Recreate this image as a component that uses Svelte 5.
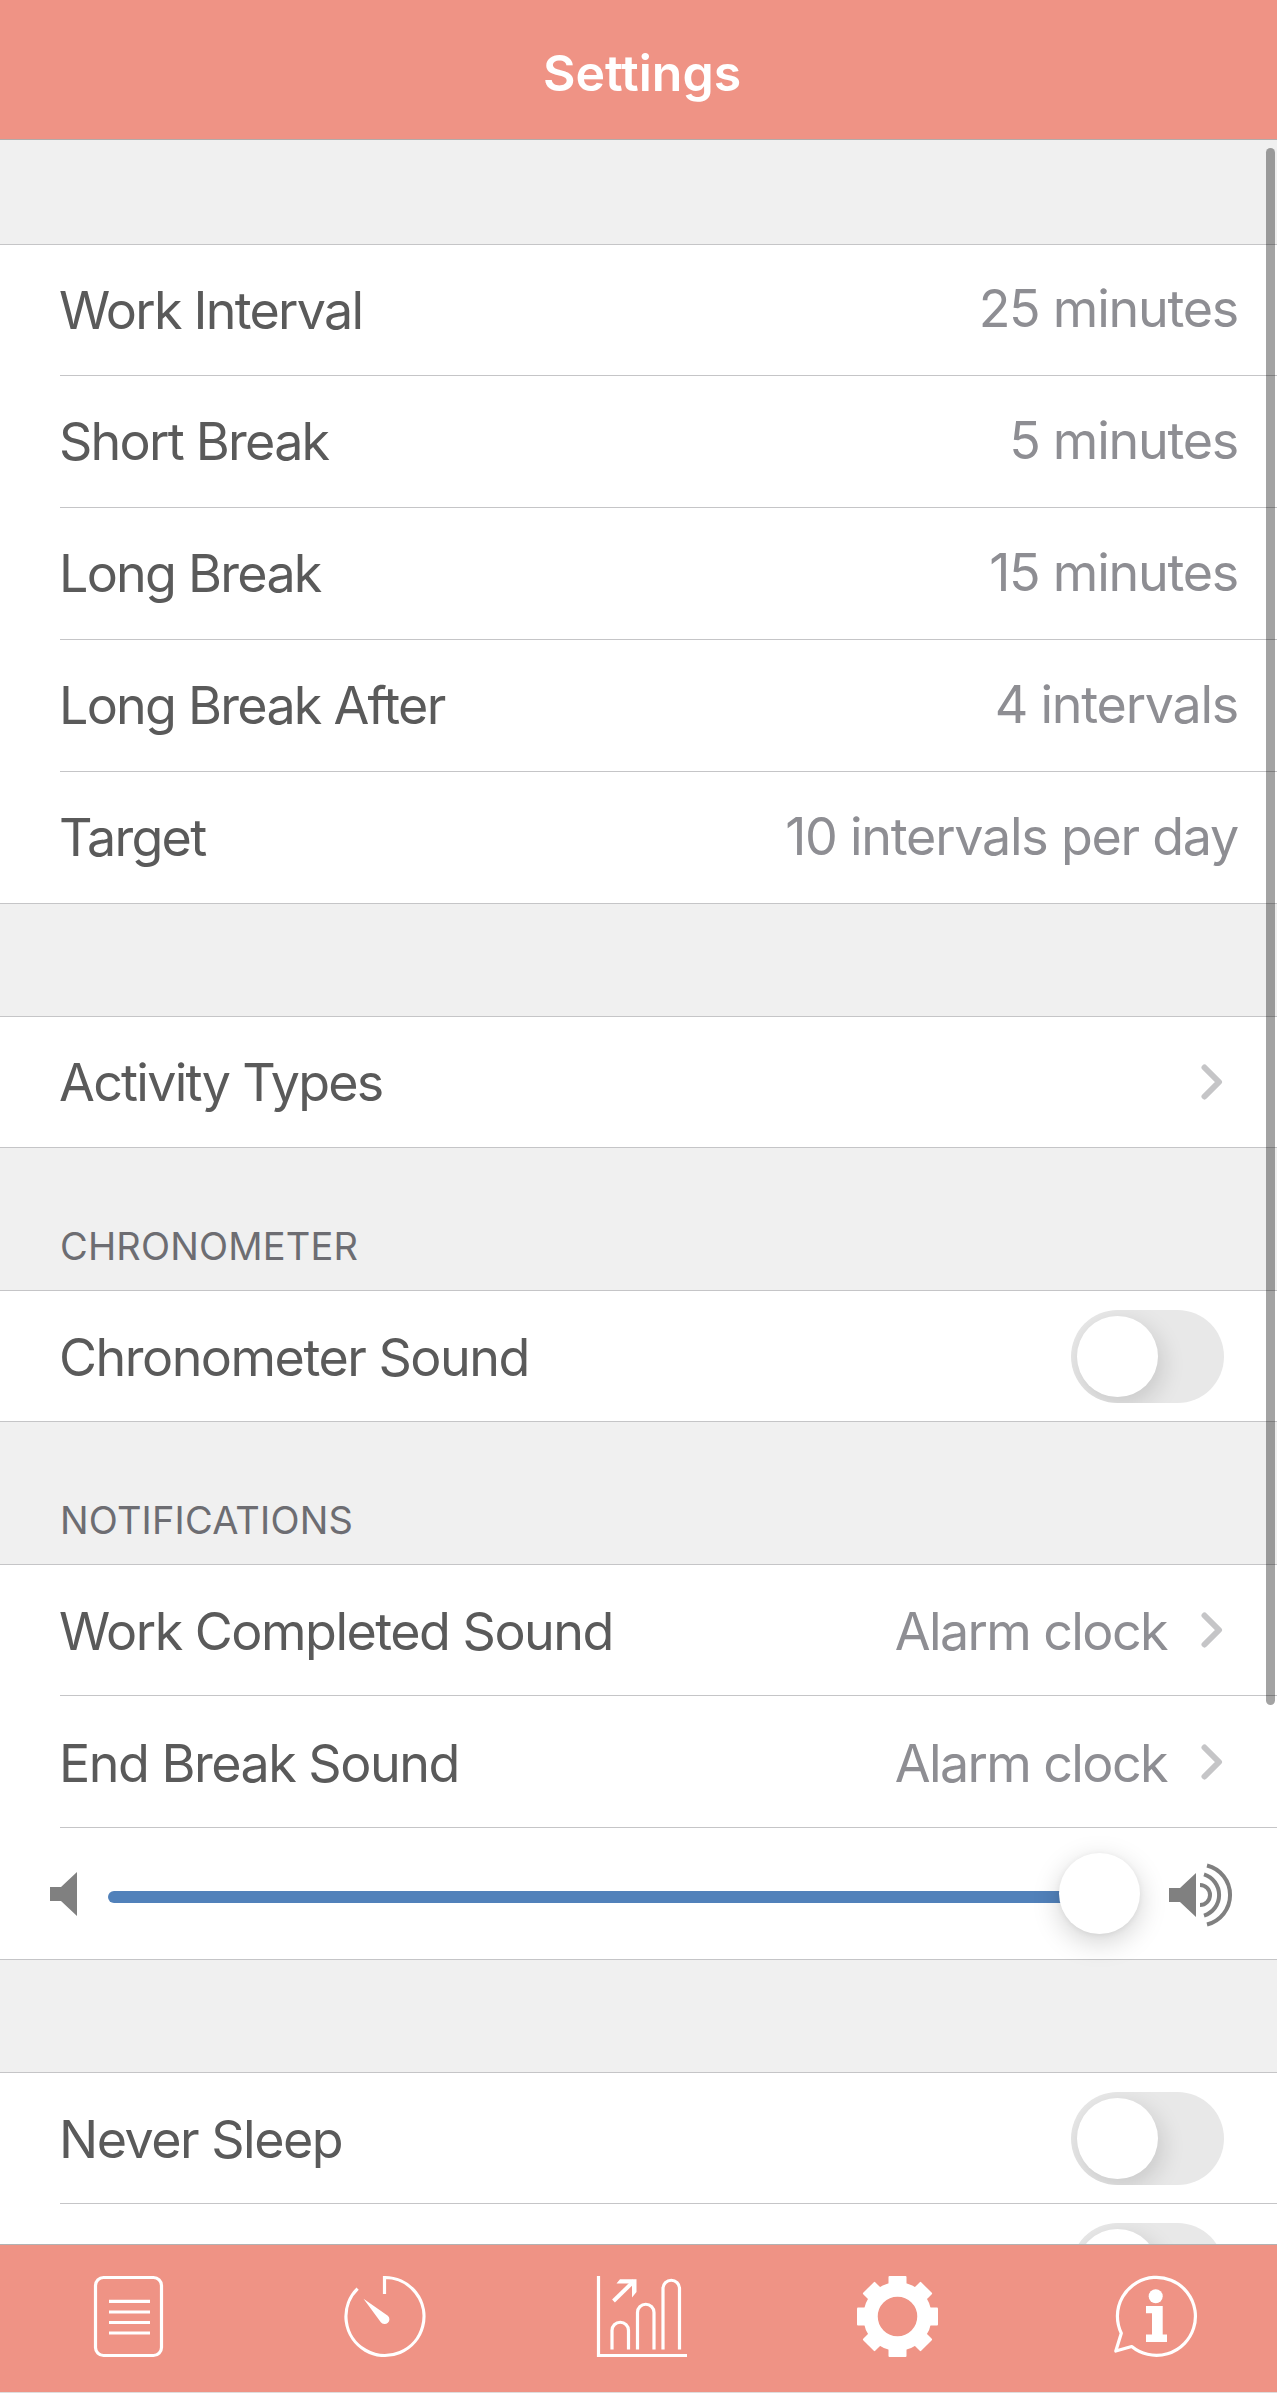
<script>
	const chevron = 'M3.5 3.5 L18 18 L3.5 32.5';

	const groups = [
		{
			gap: 104,
			rows: [
				{ label: 'Work Interval', value: '25 minutes' },
				{ label: 'Short Break', value: '5 minutes' },
				{ label: 'Long Break', value: '15 minutes' },
				{ label: 'Long Break After', value: '4 intervals' },
				{ label: 'Target', value: '10 intervals per day' }
			]
		},
		{ gap: 112, rows: [{ label: 'Activity Types', link: true }] },
		{ gap: 142, title: 'Chronometer', rows: [{ label: 'Chronometer Sound', toggle: true }] },
		{
			gap: 142,
			title: 'Notifications',
			rows: [
				{ label: 'Work Completed Sound', value: 'Alarm clock', link: true },
				{ label: 'End Break Sound', value: 'Alarm clock', link: true },
				{ slider: true }
			]
		},
		{ gap: 112, rows: [{ label: 'Never Sleep', toggle: true }, { label: '', toggle: true }] }
	];

	let volume = $state(100);
	const thumbLeft = $derived(951 * (volume / 100));

	const teeth = [0, 90, 180, 270];
</script>

<div class="screen">
	<header class="nav-bar"><h1>Settings</h1></header>

	<main class="settings">
		{#each groups as group}
			<section>
				<div class="gap" style="height: {group.gap}px">
					{#if group.title}<h2>{group.title}</h2>{/if}
				</div>
				<div class="group">
					{#each group.rows as row}
						{#if row.slider}
							<div class="row volume">
								<svg class="speaker" width="27" height="44" viewBox="0 0 27 44">
									<path d="M0 15 H11 L27 0 V44 L11 29 H0 Z" fill="#808080" />
								</svg>
								<div class="slider">
									<div class="track"></div>
									<div class="thumb" style="left: {thumbLeft}px"></div>
								</div>
								<svg class="speaker loud" width="64" height="64" viewBox="0 0 64 64">
									<path d="M0 25 H11 L27 10 V54 L11 39 H0 Z" fill="#808080" />
									<g fill="none" stroke="#808080" stroke-width="4">
										<path d="M31 22 A10 10 0 0 1 31 42" />
										<path d="M35 11.4 A21.6 21.6 0 0 1 35 52.6" />
										<path d="M38 2.5 A30.4 30.4 0 0 1 38 61.5" />
									</g>
								</svg>
							</div>
						{:else}
							<div class="row" class:low={row.toggle || (row.link && row.value)}>
								<span class="label">{row.label}</span>
								{#if row.value}<span class="value">{row.value}</span>{/if}
								{#if row.toggle}<span class="toggle"><span class="knob"></span></span>{/if}
								{#if row.link}
									<svg class="chevron" width="22" height="36" viewBox="0 0 22 36">
										<path d={chevron} fill="none" stroke="#c5c5c7" stroke-width="6" stroke-linecap="round" stroke-linejoin="round" />
									</svg>
								{/if}
							</div>
						{/if}
					{/each}
				</div>
			</section>
		{/each}
	</main>

	<div class="scrollbar"></div>

	<nav class="tab-bar">
		<!-- activities -->
		<svg width="100" height="81" viewBox="0 0 100 81">
			<rect x="17.5" y="1.5" width="66" height="78" rx="8" />
			<path d="M31 25.3 H72 M31 36 H72 M31 46.5 H72 M31 57 H72" />
		</svg>
		<!-- timer -->
		<svg width="100" height="81" viewBox="0 0 100 81">
			<path d="M50.5 18 V1.5 A39 39 0 1 1 23.6 12.7" />
			<path class="solid" d="M29.5 22.7 L53.8 39.7 A4.8 4.8 0 1 1 46.8 46.2 Z" />
		</svg>
		<!-- statistics -->
		<svg width="100" height="81" viewBox="0 0 100 81">
			<path d="M7.5 0 V79.5 H96" />
			<path d="M21 73.5 V54.5 A8.25 8.25 0 0 1 37.5 54.5 V73.5" />
			<path d="M46.5 73.5 V36.5 A8.25 8.25 0 0 1 63 36.5 V73.5" />
			<path d="M72 73.5 V12.5 A8.25 8.25 0 0 1 88.5 12.5 V73.5" />
			<path class="shaft" d="M22.5 25 L43 5" />
			<path class="solid" d="M29 3.2 H45.5 V16 L41 21.5 V7.5 H25.5 Z" />
		</svg>
		<!-- settings -->
		<svg width="100" height="81" viewBox="0 0 100 81">
			<circle class="gear" cx="50.5" cy="40.5" r="27" />
			{#each teeth as angle}
				<rect class="solid" x="41.5" y="0" width="18" height="12" rx="1" transform="rotate({angle} 50.5 40.5)" />
				<rect class="solid" x="42" y="-.5" width="17" height="12" rx="1" transform="rotate({angle + 45} 50.5 40.5)" />
			{/each}
		</svg>
		<!-- about -->
		<svg width="100" height="81" viewBox="0 0 100 81">
			<path d="M17.3 57.3 A39 39 0 1 1 27.7 70.5 L11.8 75 Z" stroke-linejoin="round" />
			<circle class="solid" cx="51.7" cy="20.3" r="7" />
			<path class="solid" d="M42 30 H58.7 V58.5 H63 V66 H42 V58.5 H48 V37.3 H42 Z" />
		</svg>
	</nav>
</div>

<style>
	:global(body) {
		margin: 0;
	}

	.screen {
		position: relative;
		display: flex;
		flex-direction: column;
		width: 1277px;
		height: 2393px;
		overflow: hidden;
		background: #f0f0f0;
		font-family: Inter, 'Liberation Sans', sans-serif;
	}

	.nav-bar {
		display: flex;
		flex: none;
		align-items: center;
		justify-content: center;
		box-sizing: border-box;
		height: 140px;
		padding: 6px 0 0 7px;
		background: #ef9385;
		border-bottom: 1px solid #b3aba9;
	}

	h1 {
		margin: 0;
		color: #fff;
		font-size: 50px;
		font-weight: 600;
	}

	.settings {
		flex: 1;
		min-height: 0;
		overflow: hidden;
	}

	.gap {
		display: flex;
		align-items: flex-end;
		box-sizing: border-box;
		padding: 0 60px 21px;
		background: #f0f0f0;
	}

	h2 {
		margin: 0;
		color: #6d6d72;
		font-size: 38px;
		font-weight: 400;
		line-height: 46px;
		letter-spacing: 0.18px;
		text-transform: uppercase;
	}

	.group {
		background: #fff;
		border-top: 1px solid #c5c5c7;
		border-bottom: 1px solid #c5c5c7;
	}

	.row {
		display: flex;
		align-items: center;
		box-sizing: border-box;
		height: 132px;
		margin-left: 60px;
		padding-right: 38px;
		border-bottom: 1px solid #c5c5c7;
		font-size: 52px;
		line-height: 60px;
		letter-spacing: -1.75px;
	}

	.row:first-child {
		height: 131px;
	}

	.row:last-child {
		height: 131px;
		border-bottom: 0;
	}

	.row:first-child:last-child {
		height: 130px;
	}

	.label {
		flex: 1;
		padding-top: 1px;
		margin-left: -1px;
		color: #5a5a5a;
	}

	.value {
		padding: 0 1px 2px 0;
		color: #8e8e93;
		letter-spacing: -1.25px;
	}

	.low .label,
	.low .value {
		padding: 4px 0 0;
		letter-spacing: -1.5px;
	}

	.low .value {
		padding-right: 1px;
		letter-spacing: -1.6px;
	}

	.chevron {
		margin: 0 16px 0 33px;
	}

	.toggle {
		box-sizing: border-box;
		width: 153px;
		height: 93px;
		margin-right: 15px;
		padding: 6px;
		overflow: hidden;
		border-radius: 47px;
		background: #e8e8e8;
	}

	.knob {
		display: block;
		width: 81px;
		height: 81px;
		border-radius: 50%;
		background: #fff;
		box-shadow: 4px 8px 24px rgba(0, 0, 0, 0.14);
	}

	.volume {
		margin-left: 0;
		padding: 0 0 0 50px;
	}

	.slider {
		position: relative;
		width: 1032px;
		margin-left: 31px;
	}

	.track {
		width: 990px;
		height: 12px;
		margin-top: 7px;
		border-radius: 6px;
		background: #5181ba;
	}

	.thumb {
		position: absolute;
		top: -31px;
		width: 81px;
		height: 81px;
		border-radius: 50%;
		background: #fff;
		box-shadow: 0 8px 28px rgba(0, 0, 0, 0.18), 0 1px 6px rgba(0, 0, 0, 0.06);
	}

	.speaker {
		flex: none;
		margin-top: 1px;
	}

	.loud {
		margin-left: 29px;
		margin-top: 2px;
	}

	.scrollbar {
		position: absolute;
		top: 148px;
		left: 1266px;
		width: 9px;
		height: 1557px;
		border-radius: 5px;
		background: rgba(0, 0, 0, 0.36);
	}

	.tab-bar {
		display: grid;
		flex: none;
		grid-template-columns: 256px 257px 256px 257px 1fr;
		align-items: start;
		box-sizing: border-box;
		height: 149px;
		padding: 31px 0 0 78px;
		background: #ef9385;
		border-top: 1px solid #b2b2b2;
		border-bottom: 1px solid #dedede;
	}

	.tab-bar svg {
		fill: none;
		stroke: #fff;
		stroke-width: 3.2;
		overflow: visible;
	}

	.tab-bar .shaft {
		stroke-width: 4;
	}

	.tab-bar .gear {
		stroke-width: 14.5;
	}

	.tab-bar .solid {
		fill: #fff;
		stroke: none;
	}
</style>
